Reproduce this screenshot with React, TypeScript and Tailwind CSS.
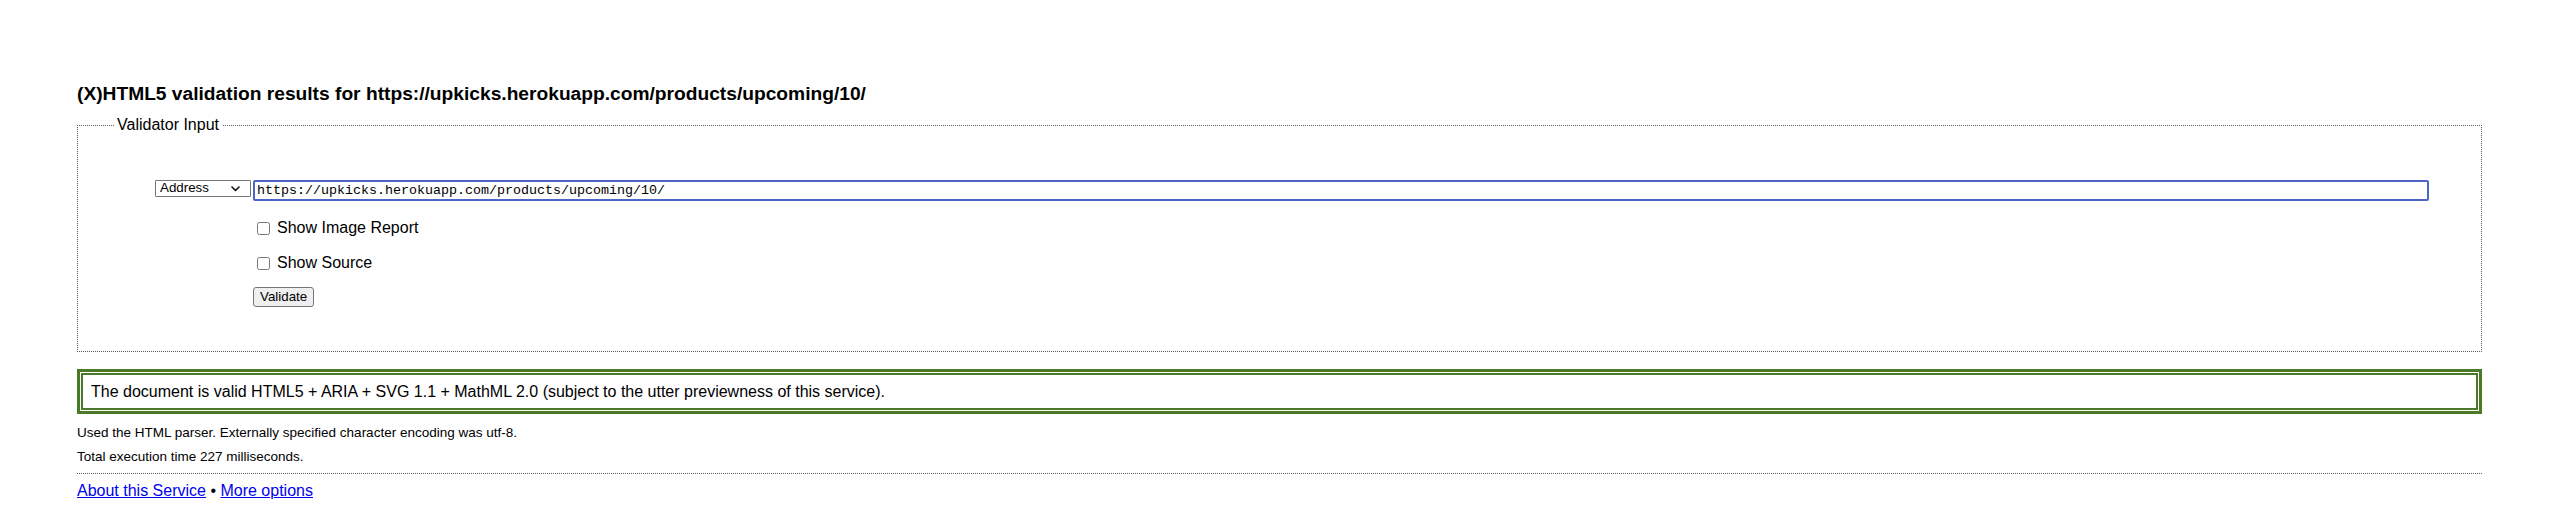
export default function App() {
  return (
    <div className="min-h-[531px] bg-white pl-[77px] pr-[78px] pt-[83px] text-black font-['Liberation_Sans',Arial,sans-serif]">
      <h1 className="text-[19.2px] font-bold leading-[22px]">
        (X)HTML5 validation results for https://upkicks.herokuapp.com/products/upcoming/10/
      </h1>

      <fieldset className="mt-[11px] border border-dotted border-[#5a5a5a] pl-0 pr-[52px] pb-[44px]">
        <legend className="ml-[36px] px-[3px] text-[16px] leading-[18px]">Validator Input</legend>

        <div className="mt-[46px] flex items-start">
          <div className="flex w-[175px] justify-end pr-[2px]">
            <div className="relative h-[17px] w-[96px]">
              <select
                defaultValue="Address"
                className="block h-[17px] w-full appearance-none rounded-[1px] border border-[#767676] bg-white pb-[2px] pl-[4px] pt-0 text-[13.33px] leading-[13px] text-black"
              >
                <option>Address</option>
              </select>
              <svg
                className="pointer-events-none absolute right-[11px] top-[6px]"
                width="9"
                height="6"
                viewBox="0 0 9 6"
                fill="none"
              >
                <polyline points="1,1 4.5,4.5 8,1" stroke="#111" strokeWidth="1.6" strokeLinecap="round" strokeLinejoin="round" />
              </svg>
            </div>
          </div>
          <input
            type="text"
            defaultValue="https://upkicks.herokuapp.com/products/upcoming/10/"
            className="h-[21px] flex-1 rounded-[2px] border-2 border-[#4c65c7] bg-white px-[2px] font-['Liberation_Mono',monospace] text-[13.33px] text-black outline-none"
          />
        </div>

        <label className="ml-[175px] mt-[17px] flex h-[20px] items-center text-[16px]">
          <input type="checkbox" className="ml-[4px] h-[13px] w-[13px]" />
          <span className="ml-[7px]">Show Image Report</span>
        </label>

        <label className="ml-[175px] mt-[15px] flex h-[20px] items-center text-[16px]">
          <input type="checkbox" className="ml-[4px] h-[13px] w-[13px]" />
          <span className="ml-[7px]">Show Source</span>
        </label>

        <div className="ml-[175px] mt-[14px] flex">
          <button
            type="button"
            className="h-[20px] rounded-[3px] border border-[#767676] bg-[#efefef] px-[6px] text-[13.33px] leading-[16px] text-black"
          >
            Validate
          </button>
        </div>
      </fieldset>

      <div className="mt-[17px] border-[3px] border-[#4a7a28] p-[1px]">
        <div className="border-2 border-[#4a7a28] px-[8px] py-[7px] text-[16px] leading-[19px]">
          The document is valid HTML5 + ARIA + SVG 1.1 + MathML 2.0 (subject to the utter previewness of this service).
        </div>
      </div>

      <p className="mt-[7px] text-[13.5px] leading-[24px]">
        Used the HTML parser. Externally specified character encoding was utf-8.
      </p>
      <p className="text-[13.5px] leading-[24px]">Total execution time 227 milliseconds.</p>

      <div className="mt-[4px] border-t border-dotted border-[#5a5a5a]" />

      <p className="mt-[7px] text-[16px] leading-[20px]">
        <a href="#" className="text-[#0000ee] underline">
          About this Service
        </a>{" "}
        •{" "}
        <a href="#" className="text-[#0000ee] underline">
          More options
        </a>
      </p>
    </div>
  );
}
